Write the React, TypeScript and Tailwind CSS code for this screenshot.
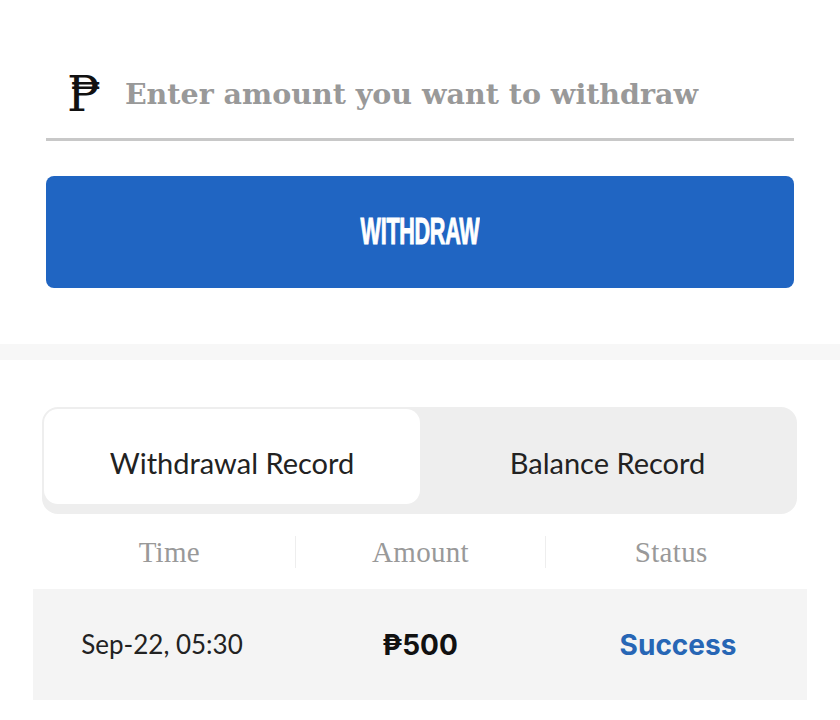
import React from "react";

export default function App() {
  return (
    <div className="w-[840px] h-[720px] bg-white overflow-hidden relative">
      <div className="px-[46px] pt-[68px]">
        <div className="flex items-center h-[52px] pl-[21px]">
          <span className="text-[#111] text-[48px] leading-none mr-[24px]" style={{ fontFamily: '"DejaVu Serif", serif' }}>₱</span>
          <span className="text-[#999] text-[28.5px] font-bold leading-none" style={{ fontFamily: '"DejaVu Serif", serif' }}>Enter amount you want to withdraw</span>
        </div>
        <div className="mt-[18px] h-[3px] bg-[#c8c8c8]" />
        <button className="mt-[35px] w-full h-[112px] rounded-[8px] bg-[#2065c2] flex items-center justify-center">
          <span className="text-white text-[36px] font-bold leading-none inline-block scale-x-[0.6] tracking-[-0.5px]" style={{ fontFamily: '"Liberation Sans", sans-serif', WebkitTextStroke: '1px white' }}>WITHDRAW</span>
        </button>
      </div>
      <div className="mt-[56px] h-[16px] bg-[#f7f7f7]" />
      <div className="px-[42px] pt-[47px] pr-[43px]">
        <div className="flex bg-[#eeeeee] rounded-[16px] p-[2px] pb-[10px] h-[107px]">
          <div className="w-[376px] bg-white rounded-[14px] flex items-center justify-center text-[#222] text-[29px] pt-[13px]" style={{ fontFamily: 'Lato, sans-serif' }}>Withdrawal Record</div>
          <div className="flex-1 flex items-center justify-center text-[#222] text-[29px] pt-[13px]" style={{ fontFamily: 'Lato, sans-serif' }}>Balance Record</div>
        </div>
      </div>
      <div className="px-[44px] mt-[22px]">
        <div className="grid grid-cols-3 h-[32px] items-center text-[#999] text-[29px] tracking-[0.3px]" style={{ fontFamily: '"Liberation Serif", serif' }}>
          <div className="text-center leading-none">Time</div>
          <div className="text-center leading-none border-l border-[#eeeeee] h-full flex items-center justify-center">Amount</div>
          <div className="text-center leading-none border-l border-[#eeeeee] h-full flex items-center justify-center">Status</div>
        </div>
      </div>
      <div className="mx-[33px] mt-[21px] h-[111px] bg-[#f4f4f4] grid grid-cols-3 items-center">
        <div className="text-center text-[#222] text-[26px]" style={{ fontFamily: 'Lato, sans-serif' }}>Sep-22, 05:30</div>
        <div className="text-center text-[#111] text-[28px] font-bold" style={{ fontFamily: 'Inter, sans-serif' }}>₱500</div>
        <div className="text-center text-[#2766b5] text-[28px] font-bold" style={{ fontFamily: 'Inter, sans-serif' }}>Success</div>
      </div>
    </div>
  );
}
